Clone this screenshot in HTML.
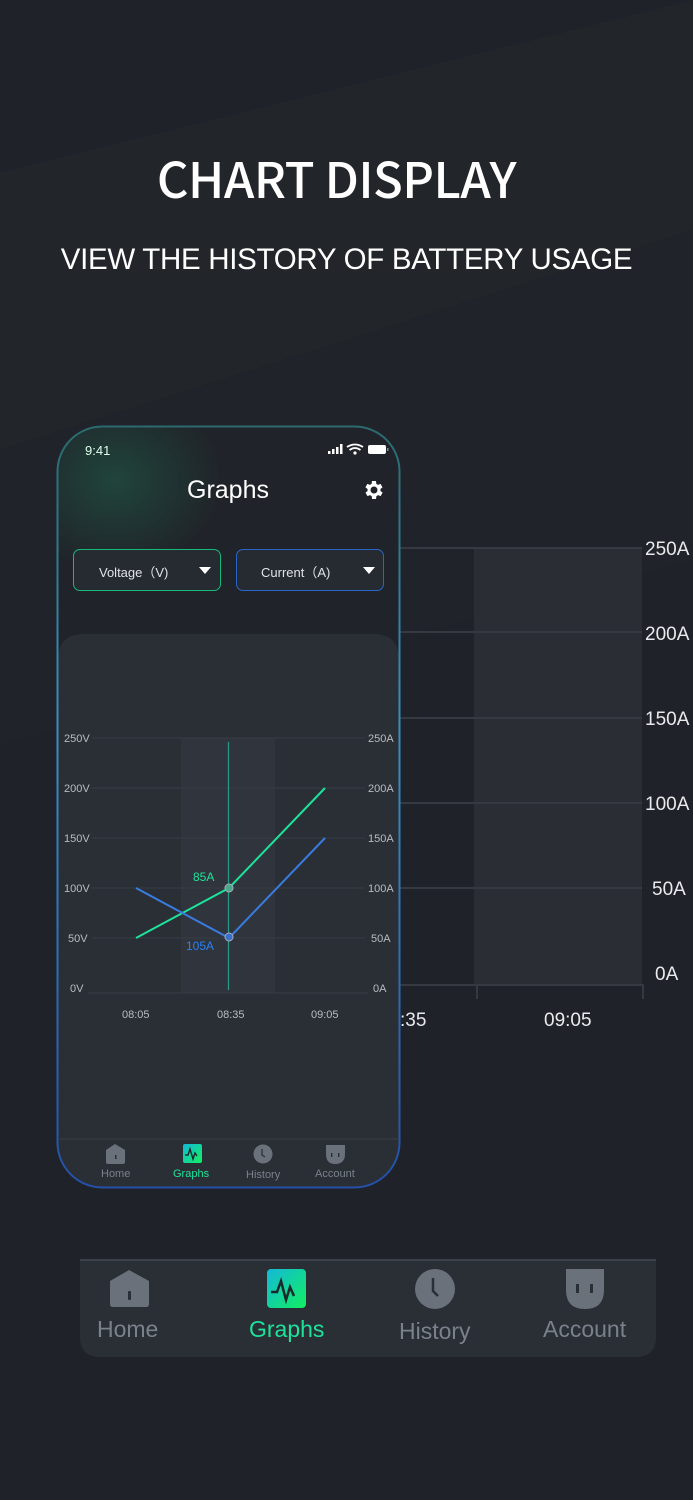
<!DOCTYPE html>
<html><head><meta charset="utf-8"><style>
*{margin:0;padding:0;box-sizing:border-box}
body{width:693px;height:1500px;background:#1f2228;position:relative;overflow:hidden;font-family:"Liberation Sans",sans-serif;color:#fff}
.abs{position:absolute}
</style></head><body>
<svg class="abs" style="left:0;top:0" width="693" height="1500">
<defs>
<linearGradient id="pb" x1="0" y1="0" x2="0" y2="1"><stop offset="0" stop-color="#2b6a6e"/><stop offset="0.4" stop-color="#3a8fc0"/><stop offset="1" stop-color="#2450a8"/></linearGradient>
<radialGradient id="glow" cx="0.5" cy="0.5" r="0.5"><stop offset="0" stop-color="#1f5a48" stop-opacity="0.6"/><stop offset="1" stop-color="#1f5a48" stop-opacity="0"/></radialGradient>
<radialGradient id="glow2" cx="0.5" cy="1" r="0.5"><stop offset="0" stop-color="#1d8a5a" stop-opacity="0.5"/><stop offset="1" stop-color="#1d8a5a" stop-opacity="0"/></radialGradient>
<linearGradient id="ig" x1="0" y1="0" x2="1" y2="1"><stop offset="0" stop-color="#13b8d8"/><stop offset="1" stop-color="#12f060"/></linearGradient>
<clipPath id="pc"><rect x="58" y="427" width="341" height="760" rx="44"/></clipPath>
<clipPath id="nc"><path d="M80 1259 L656 1259 L656 1337 Q656 1357 636 1357 L100 1357 Q80 1357 80 1337 Z"/></clipPath>
</defs>
<polygon points="0,173 693,0 693,230 0,450" fill="#222529"/>
<polygon points="0,450 693,230 693,560 0,745" fill="#202329"/>
<rect x="474" y="548" width="168" height="436" fill="#2a2e34"/>
<g stroke="#353a42" stroke-width="2">
<line x1="400" y1="548" x2="642" y2="548"/><line x1="400" y1="632" x2="642" y2="632"/><line x1="400" y1="718" x2="642" y2="718"/><line x1="400" y1="803" x2="642" y2="803"/><line x1="400" y1="888" x2="642" y2="888"/>
<line x1="400" y1="985" x2="644" y2="985"/><line x1="477" y1="985" x2="477" y2="999"/><line x1="643" y1="985" x2="643" y2="999"/>
</g>
<g fill="#e8eaed" font-size="19"><text x="645" y="555">250A</text><text x="645" y="640">200A</text><text x="645" y="725">150A</text><text x="645" y="810">100A</text><text x="652" y="895">50A</text><text x="655" y="980">0A</text>
<text x="400" y="1026">:35</text><text x="544" y="1026">09:05</text></g>
<rect x="57.5" y="426.5" width="342" height="761" rx="45" fill="#202329"/>
<g clip-path="url(#pc)">
<ellipse cx="115" cy="480" rx="110" ry="95" fill="url(#glow)"/>
<path d="M58 660 Q58 634 84 634 L374 634 Q399 634 399 660 L399 1190 L58 1190 Z" fill="#2a2f36"/>
<ellipse cx="191" cy="1190" rx="50" ry="22" fill="url(#glow2)"/>
</g>
<rect x="57.5" y="426.5" width="342" height="761" rx="45" fill="none" stroke="url(#pb)" stroke-width="2"/>
<rect x="181" y="738" width="94" height="255" fill="#30353d"/>
<g stroke="#373d45" stroke-width="1"><line x1="92" y1="738" x2="365" y2="738"/><line x1="92" y1="788" x2="365" y2="788"/><line x1="92" y1="838" x2="365" y2="838"/><line x1="92" y1="888" x2="365" y2="888"/><line x1="92" y1="938" x2="365" y2="938"/><line x1="88" y1="993" x2="368" y2="993"/></g>
<g fill="#b8bcc2" font-size="11"><text x="64" y="742">250V</text><text x="64" y="792">200V</text><text x="64" y="842">150V</text><text x="64" y="892">100V</text><text x="68" y="942">50V</text><text x="70" y="992">0V</text>
<text x="368" y="742">250A</text><text x="368" y="792">200A</text><text x="368" y="842">150A</text><text x="368" y="892">100A</text><text x="371" y="942">50A</text><text x="373" y="992">0A</text>
<text x="122" y="1018">08:05</text><text x="217" y="1018">08:35</text><text x="311" y="1018">09:05</text></g>
<line x1="228.5" y1="742" x2="228.5" y2="990" stroke="#2a9a8a" stroke-width="1.2"/>
<polyline points="136,938 229,888 325,788" fill="none" stroke="#1de39a" stroke-width="2"/>
<polyline points="136,888 229,938 325,838" fill="none" stroke="#3a7be0" stroke-width="2"/>
<circle cx="229" cy="888" r="4" fill="#4aa88a" stroke="#aab" stroke-width="1"/>
<circle cx="229" cy="937" r="4" fill="#3a70c8" stroke="#aab" stroke-width="1"/>
<text x="193" y="881" fill="#1de39a" font-size="12">85A</text>
<text x="186" y="950" fill="#2a80f0" font-size="12">105A</text>
<line x1="60" y1="1139" x2="398" y2="1139" stroke="#3a3f47"/>
<path d="M80 1259 L656 1259 L656 1337 Q656 1357 636 1357 L100 1357 Q80 1357 80 1337 Z" fill="#2a2f36"/>
<g clip-path="url(#nc)"><ellipse cx="290" cy="1360" rx="85" ry="32" fill="url(#glow2)"/></g>
<line x1="80" y1="1260" x2="656" y2="1260" stroke="#3c414a" stroke-width="2"/>
</svg>
<div class="abs" style="left:0;width:673px;top:143px;text-align:center;font-size:49px;line-height:70px;font-family:'Noto Sans CJK SC','Liberation Sans',sans-serif;font-weight:500;letter-spacing:-0.5px">CHART DISPLAY</div>
<div class="abs" style="left:0;width:693px;top:243px;text-align:center;font-size:29.5px;letter-spacing:-0.3px">VIEW THE HISTORY OF BATTERY USAGE</div>
<div class="abs" style="left:85px;top:443px;font-size:13px;color:#dfe">9:41</div>
<svg class="abs" style="left:326px;top:443px" width="64" height="14">
<rect x="2" y="8" width="2.5" height="3" fill="#fff"/><rect x="6" y="6" width="2.5" height="5" fill="#fff"/><rect x="10" y="4" width="2.5" height="7" fill="#fff"/><rect x="14" y="1" width="2.5" height="10" fill="#fff"/>
<path d="M21 4 Q29 -1 37 4 M23.5 7 Q29 3 34.5 7" stroke="#fff" stroke-width="1.8" fill="none"/><circle cx="29" cy="10" r="1.6" fill="#fff"/>
<rect x="42" y="2" width="18" height="9" rx="2" fill="#fff"/><rect x="61" y="5" width="1.5" height="3" fill="#888"/>
</svg>
<div class="abs" style="left:187px;top:476px;font-size:25px">Graphs</div>
<svg class="abs" style="left:361px;top:478px" width="24" height="24" viewBox="0 0 24 24"><path fill="#fff" d="M19.4 13a7.5 7.5 0 0 0 0-2l2.1-1.6-2-3.5-2.5 1a7 7 0 0 0-1.7-1L15 3h-4l-.4 2.9a7 7 0 0 0-1.7 1l-2.5-1-2 3.5L6.6 11a7.5 7.5 0 0 0 0 2l-2.1 1.6 2 3.5 2.5-1a7 7 0 0 0 1.7 1L11 21h4l.4-2.9a7 7 0 0 0 1.700-1l2.5 1 2-3.5zM13 15.5a3.5 3.5 0 1 1 0-7 3.5 3.5 0 0 1 0 7z"/></svg>
<div class="abs" style="left:73px;top:549px;width:148px;height:42px;border-radius:7px;border:1.5px solid #18b878;background:#262b32"></div>
<div class="abs" style="left:99px;top:562px;font-size:13px;color:#e0e3e6">Voltage（V)</div>
<div class="abs" style="left:199px;top:567px;width:0;height:0;border-left:6px solid transparent;border-right:6px solid transparent;border-top:7px solid #fff"></div>
<div class="abs" style="left:236px;top:549px;width:148px;height:42px;border-radius:7px;border:1.5px solid #2a66c8;background:#262b32"></div>
<div class="abs" style="left:261px;top:562px;font-size:13px;color:#e0e3e6">Current（A)</div>
<div class="abs" style="left:363px;top:567px;width:0;height:0;border-left:6px solid transparent;border-right:6px solid transparent;border-top:7px solid #fff"></div>
<svg class="abs" style="left:100px;top:1143px" width="270" height="22">
<path d="M6 7 L15 1 L25 7 L25 19 Q25 21 23 21 L8 21 Q6 21 6 19 Z" fill="#6a717b"/><rect x="15" y="12" width="1.5" height="4" fill="#2a2f36"/>
<rect x="83" y="1" width="19" height="19" rx="2" fill="url(#ig)"/><path d="M85 12 L88 12 L90 6 L93 16 L95 10 L97 13" stroke="#1a2a2a" stroke-width="1.4" fill="none"/>
<circle cx="163" cy="11" r="9.5" fill="#6a717b"/><path d="M162 6 L162 12 L165 14" stroke="#2a2f36" stroke-width="1.3" fill="none"/>
<path d="M226 2 L245 2 L245 11 Q245 21 235 21 Q226 21 226 11 Z" fill="#6a717b"/><rect x="231" y="10" width="1.4" height="4" fill="#2a2f36"/><rect x="238" y="10" width="1.4" height="4" fill="#2a2f36"/>
</svg>
<div class="abs" style="left:101px;top:1168px;font-size:11px;color:#7a818b">Home</div>
<div class="abs" style="left:173px;top:1168px;font-size:11px;color:#1de39a">Graphs</div>
<div class="abs" style="left:246px;top:1169px;font-size:11px;color:#7a818b">History</div>
<div class="abs" style="left:315px;top:1168px;font-size:11px;color:#7a818b">Account</div>
<svg class="abs" style="left:100px;top:1268px" width="540" height="42">
<path d="M10 13 L29 2 L49 13 L49 36 Q49 39 46 39 L13 39 Q10 39 10 36 Z" fill="#6a717b"/><rect x="28" y="23" width="3" height="9" rx="1" fill="#2a2f36"/>
<rect x="167" y="1" width="39" height="39" rx="4" fill="url(#ig)"/><path d="M171 24 L177 24 L181 13 L186 32 L190 19 L194 28" stroke="#1a2a2a" stroke-width="2.5" fill="none"/>
<ellipse cx="335" cy="21" rx="20" ry="20" fill="#6a717b"/><path d="M333 10 L333 23 L338 28" stroke="#2a2f36" stroke-width="2.5" fill="none"/>
<path d="M466 1 L504 1 L504 22 Q504 41 485 41 Q466 41 466 22 Z" fill="#6a717b"/><rect x="476" y="16" width="3" height="9" fill="#2a2f36"/><rect x="490" y="16" width="3" height="9" fill="#2a2f36"/>
</svg>
<div class="abs" style="left:97px;top:1316px;font-size:23px;color:#7a818b">Home</div>
<div class="abs" style="left:249px;top:1316px;font-size:23px;color:#1de39a">Graphs</div>
<div class="abs" style="left:399px;top:1318px;font-size:23px;color:#7a818b">History</div>
<div class="abs" style="left:543px;top:1316px;font-size:23px;color:#7a818b">Account</div>
</body></html>
